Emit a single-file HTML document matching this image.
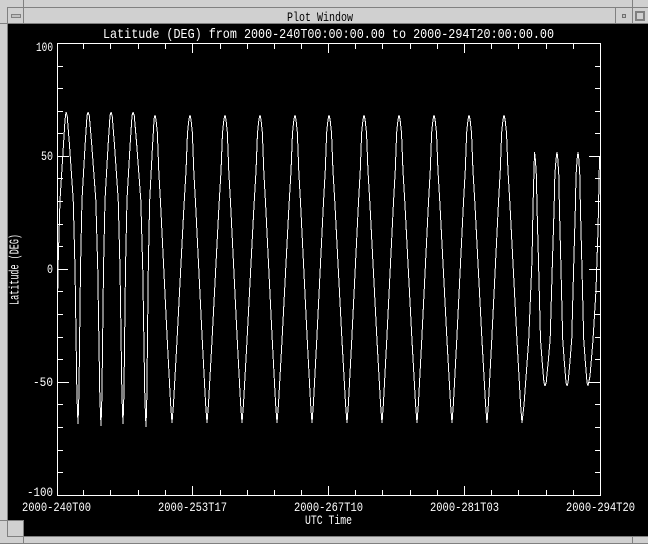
<!DOCTYPE html>
<html>
<head>
<meta charset="utf-8">
<title>Plot Window</title>
<style>
html,body{margin:0;padding:0;background:#000;}
svg{display:block;}
text{font-family:"Liberation Mono",monospace;fill:#fff;}
</style>
</head>
<body>
<svg width="648" height="544" viewBox="0 0 648 544" xmlns="http://www.w3.org/2000/svg">
<defs>
<polyline id="n" points="0,0 .1,.012 .29,.106 .6,.28 .75,.5 .91,.907 1,1" fill="none" stroke="#fff" stroke-width="1" vector-effect="non-scaling-stroke"/>
<polyline id="w" points="0,0 .06,.015 .14,.058 .22,.18 .33,.29 .72,.73 .92,.94 1,1" fill="none" stroke="#fff" stroke-width="1" vector-effect="non-scaling-stroke"/>
<polyline id="s" points="0,0 .08,.03 .18,.1 .24,.235 .4,.5 .57,.8 .72,.89 .9,.985 1,1" fill="none" stroke="#fff" stroke-width="1" vector-effect="non-scaling-stroke"/>
</defs>
<rect width="648" height="544" fill="#000"/>

<!-- window frame -->
<g shape-rendering="crispEdges">
<rect x="0" y="0" width="648" height="24" fill="#d0d0d0"/>
<rect x="0" y="0" width="8" height="544" fill="#d0d0d0"/>
<rect x="0" y="536" width="648" height="8" fill="#d0d0d0"/>
<rect x="8" y="520" width="16" height="16" fill="#d0d0d0"/>
<g fill="#808080">
<rect x="8" y="7" width="640" height="1"/>
<rect x="0" y="23" width="648" height="1"/>
<rect x="23" y="0" width="1" height="24"/>
<rect x="632" y="0" width="1" height="24"/>
<rect x="615" y="8" width="1" height="16"/>
<rect x="7" y="7" width="1" height="530"/>
<rect x="0" y="520" width="24" height="1"/>
<rect x="7" y="536" width="641" height="1"/>
<rect x="23" y="520" width="1" height="24"/>
<rect x="632" y="536" width="1" height="8"/>
<rect x="0" y="543" width="648" height="1"/>
</g>
<rect x="11.5" y="14.5" width="9" height="3" fill="#c0c0c0" stroke="#808080"/>
<rect x="622.5" y="14.5" width="3" height="3" fill="#c0c0c0" stroke="#707070"/>
<rect x="636" y="12" width="8" height="8" fill="none" stroke="#808080" stroke-width="2"/>
</g>
<text x="287" y="21" font-size="13" textLength="66" lengthAdjust="spacingAndGlyphs" style="fill:#000">Plot Window</text>

<!-- axes -->
<g shape-rendering="crispEdges" stroke="#fff" stroke-width="1" fill="none">
<rect x="57.5" y="43.5" width="543" height="452"/>
<path d="M83 44v5M110 44v5M138 44v5M165 44v5M192 44v9M220 44v5M247 44v5M274 44v5M301 44v5M328 44v9M355 44v5M382 44v5M410 44v5M437 44v5M464 44v9M491 44v5M518 44v5M546 44v5M573 44v5" transform="translate(.5 0)"/>
<path d="M83 495v-5M110 495v-5M138 495v-5M165 495v-5M192 495v-9M220 495v-5M247 495v-5M274 495v-5M301 495v-5M328 495v-9M355 495v-5M382 495v-5M410 495v-5M437 495v-5M464 495v-9M491 495v-5M518 495v-5M546 495v-5M573 495v-5" transform="translate(.5 0)"/>
<path d="M58 66.5h5M58 88.5h5M58 111.5h5M58 133.5h5M58 156.5h11M58 178.5h5M58 201.5h5M58 224.5h5M58 246.5h5M58 269.5h10M58 291.5h5M58 314.5h5M58 337.5h5M58 359.5h5M58 382.5h11M58 404.5h5M58 427.5h5M58 450.5h5M58 472.5h5"/>
<path d="M600 66.5h-5M600 88.5h-5M600 111.5h-5M600 133.5h-5M600 156.5h-11M600 178.5h-5M600 201.5h-5M600 224.5h-5M600 246.5h-5M600 269.5h-11M600 291.5h-5M600 314.5h-5M600 337.5h-5M600 359.5h-5M600 382.5h-11M600 404.5h-5M600 427.5h-5M600 450.5h-5M600 472.5h-5"/>
</g>

<!-- curve -->
<g shape-rendering="crispEdges">
<polyline points="57.5,310 58,269 60,200 62.7,157 65,120 66,112" fill="none" stroke="#fff"/>
<use href="#n" transform="translate(66 112) scale(12 312)"/>
<use href="#n" transform="translate(88 112) scale(-10 312)"/>
<use href="#n" transform="translate(88 112) scale(13 314)"/>
<use href="#n" transform="translate(111 112) scale(-10 314)"/>
<use href="#n" transform="translate(111 112) scale(12 312)"/>
<use href="#n" transform="translate(133 112) scale(-10 312)"/>
<use href="#n" transform="translate(133 112) scale(13 315)"/>
<use href="#n" transform="translate(155 115) scale(-9 312)"/>
<use href="#w" transform="translate(155 115) scale(17 308)"/>
<use href="#w" transform="translate(190 115) scale(-18 308)"/>
<use href="#w" transform="translate(190 115) scale(17 308)"/>
<use href="#w" transform="translate(225 115) scale(-18 308)"/>
<use href="#w" transform="translate(225 115) scale(17 308)"/>
<use href="#w" transform="translate(260 115) scale(-18 308)"/>
<use href="#w" transform="translate(260 115) scale(17 308)"/>
<use href="#w" transform="translate(295 115) scale(-18 308)"/>
<use href="#w" transform="translate(295 115) scale(17 308)"/>
<use href="#w" transform="translate(329 115) scale(-17 308)"/>
<use href="#w" transform="translate(329 115) scale(18 308)"/>
<use href="#w" transform="translate(364 115) scale(-17 308)"/>
<use href="#w" transform="translate(364 115) scale(18 308)"/>
<use href="#w" transform="translate(399 115) scale(-17 308)"/>
<use href="#w" transform="translate(399 115) scale(18 308)"/>
<use href="#w" transform="translate(434 115) scale(-17 308)"/>
<use href="#w" transform="translate(434 115) scale(18 308)"/>
<use href="#w" transform="translate(469 115) scale(-17 308)"/>
<use href="#w" transform="translate(469 115) scale(18 308)"/>
<use href="#w" transform="translate(504 115) scale(-17 308)"/>
<use href="#w" transform="translate(504 115) scale(18 308)"/>
<polyline points="522,423 524,405 528.7,340 532,260 533,207 534,170 534.5,152" fill="none" stroke="#fff"/>
<use href="#s" transform="translate(534.5 152) scale(10.5 234)"/>
<use href="#s" transform="translate(557 152) scale(-12 234)"/>
<use href="#s" transform="translate(557 152) scale(10 234)"/>
<use href="#s" transform="translate(578 152) scale(-11 234)"/>
<use href="#s" transform="translate(578 152) scale(10 234)"/>
<polyline points="588,386 590,376 593,340 596,290 598,230 599,183 599.5,157" fill="none" stroke="#fff"/>
</g>

<!-- labels -->
<text x="103" y="38" font-size="14" textLength="451" lengthAdjust="spacingAndGlyphs">Latitude (DEG) from 2000-240T00:00:00.00 to 2000-294T20:00:00.00</text>
<text x="36" y="51" font-size="12.5" textLength="17" lengthAdjust="spacingAndGlyphs">100</text>
<text x="41" y="160" font-size="12.5" textLength="12" lengthAdjust="spacingAndGlyphs">50</text>
<text x="47" y="273" font-size="12.5" textLength="6" lengthAdjust="spacingAndGlyphs">0</text>
<text x="33" y="386" font-size="12.5" textLength="20" lengthAdjust="spacingAndGlyphs">-50</text>
<text x="27" y="496" font-size="12.5" textLength="26" lengthAdjust="spacingAndGlyphs">-100</text>
<text x="22" y="511" font-size="12.5" textLength="69" lengthAdjust="spacingAndGlyphs">2000-240T00</text>
<text x="158" y="511" font-size="12.5" textLength="69" lengthAdjust="spacingAndGlyphs">2000-253T17</text>
<text x="294" y="511" font-size="12.5" textLength="69" lengthAdjust="spacingAndGlyphs">2000-267T10</text>
<text x="430" y="511" font-size="12.5" textLength="69" lengthAdjust="spacingAndGlyphs">2000-281T03</text>
<text x="566" y="511" font-size="12.5" textLength="69" lengthAdjust="spacingAndGlyphs">2000-294T20</text>
<text x="305" y="524" font-size="12.5" textLength="47" lengthAdjust="spacingAndGlyphs">UTC Time</text>
<text transform="translate(18.5 305) rotate(-90)" font-size="13.5" textLength="71" lengthAdjust="spacingAndGlyphs">Latitude (DEG)</text>
</svg>
</body>
</html>
